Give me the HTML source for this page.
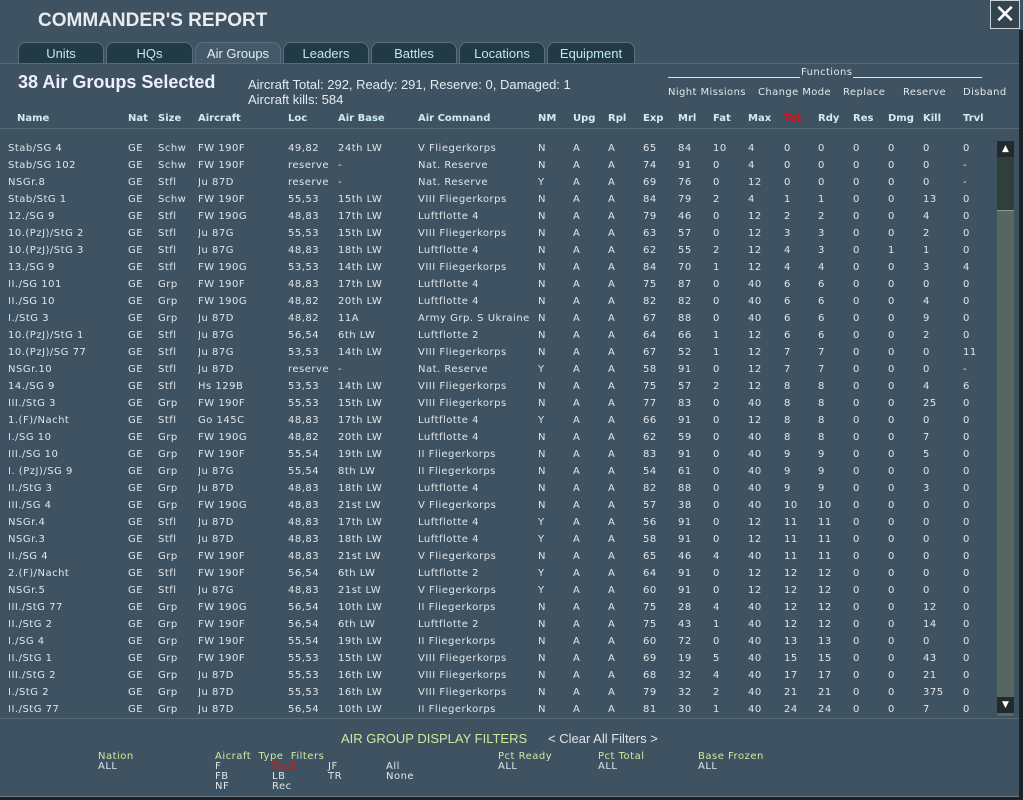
<!DOCTYPE html>
<html><head><meta charset="utf-8"><style>
*{margin:0;padding:0;box-sizing:border-box}
body{width:1023px;height:800px;overflow:hidden;background:#3f5262;font-family:"DejaVu Sans","Liberation Sans",sans-serif;color:#dfe6ea;position:relative}
.abs{position:absolute;white-space:nowrap}
.title{left:38px;top:10px;font:bold 19px "Liberation Sans",sans-serif;color:#e8ecef}
.close{left:990px;top:0;width:30px;height:29px;border:1px solid #c9d2d8;background:#34444f;color:#fff;font:26px "Liberation Sans",sans-serif;text-align:center;line-height:27px}
.tab{position:absolute;top:42px;height:22px;background:#213a46;border:1px solid #5b6f7b;border-bottom:none;border-radius:8px 8px 0 0;color:#bfe8ee;font:13px "Liberation Sans",sans-serif;text-align:center;line-height:22px}
.tab.act{background:#44596a;color:#e6eef2}
.hl{position:absolute;left:0;width:1023px;height:1px;background:#2a3a45;border-bottom:1px solid #566a77}
.sel{left:18px;top:72px;font:bold 18px "Liberation Sans",sans-serif;color:#eef}
.tot{left:248px;top:77px;font:13px/15px "Liberation Sans",sans-serif;color:#e4ebef}
.fn{font-size:10px;letter-spacing:.4px;color:#dfe8ec}
table{position:absolute;left:8px;border-collapse:collapse;table-layout:fixed;font-size:10px;letter-spacing:.5px}
td{height:17px;padding:0;white-space:nowrap;overflow:hidden}
thead td{font-weight:bold;color:#cdeef2;letter-spacing:0}
.flt{font-size:10px;letter-spacing:.5px;line-height:10px}
.g{color:#cde9a0}
</style></head><body>
<div class="abs title">COMMANDER'S REPORT</div>
<div class="abs close">✕</div>
<div class="tab" style="left:18px;width:86px">Units</div>
<div class="tab" style="left:106px;width:87px">HQs</div>
<div class="tab act" style="left:195px;width:86px">Air Groups</div>
<div class="tab" style="left:283px;width:86px">Leaders</div>
<div class="tab" style="left:371px;width:86px">Battles</div>
<div class="tab" style="left:459px;width:86px">Locations</div>
<div class="tab" style="left:547px;width:88px">Equipment</div>
<div class="hl" style="top:63px"></div>
<div class="abs sel">38 Air Groups Selected</div>
<div class="abs tot">Aircraft Total: 292, Ready: 291, Reserve: 0, Damaged: 1<br>Aircraft kills: 584</div>
<div class="abs" style="left:668px;top:77px;width:314px;height:1px;background:#e0e6ea"></div>
<div class="abs fn" style="left:800px;top:67px;background:#3f5262;padding:0 1px">Functions</div>
<div class="abs fn" style="left:668px;top:87px">Night Missions</div>
<div class="abs fn" style="left:758px;top:87px">Change Mode</div>
<div class="abs fn" style="left:843px;top:87px">Replace</div>
<div class="abs fn" style="left:903px;top:87px">Reserve</div>
<div class="abs fn" style="left:963px;top:87px">Disband</div>
<table style="top:110px;width:990px">
<colgroup><col style="width:120px"><col style="width:30px"><col style="width:40px"><col style="width:90px"><col style="width:50px"><col style="width:80px"><col style="width:120px"><col style="width:35px"><col style="width:35px"><col style="width:35px"><col style="width:35px"><col style="width:35px"><col style="width:35px"><col style="width:36px"><col style="width:34px"><col style="width:35px"><col style="width:35px"><col style="width:35px"><col style="width:40px"><col></colgroup>
<thead><tr><td style="padding-left:9px">Name</td><td>Nat</td><td>Size</td><td>Aircraft</td><td>Loc</td><td>Air Base</td><td>Air Comnand</td><td>NM</td><td>Upg</td><td>Rpl</td><td>Exp</td><td>Mrl</td><td>Fat</td><td>Max</td><td style="color:#d11">Tot</td><td>Rdy</td><td>Res</td><td>Dmg</td><td>Kill</td><td>Trvl</td></tr></thead>
</table>
<div class="hl" style="top:128px"></div>
<table style="top:140px;width:990px">
<colgroup><col style="width:120px"><col style="width:30px"><col style="width:40px"><col style="width:90px"><col style="width:50px"><col style="width:80px"><col style="width:120px"><col style="width:35px"><col style="width:35px"><col style="width:35px"><col style="width:35px"><col style="width:35px"><col style="width:35px"><col style="width:36px"><col style="width:34px"><col style="width:35px"><col style="width:35px"><col style="width:35px"><col style="width:40px"><col></colgroup>
<tbody>
<tr><td>Stab/SG 4</td><td>GE</td><td>Schw</td><td>FW 190F</td><td>49,82</td><td>24th LW</td><td>V Fliegerkorps</td><td>N</td><td>A</td><td>A</td><td>65</td><td>84</td><td>10</td><td>4</td><td>0</td><td>0</td><td>0</td><td>0</td><td>0</td><td>0</td></tr>
<tr><td>Stab/SG 102</td><td>GE</td><td>Schw</td><td>FW 190F</td><td>reserve</td><td>-</td><td>Nat. Reserve</td><td>N</td><td>A</td><td>A</td><td>74</td><td>91</td><td>0</td><td>4</td><td>0</td><td>0</td><td>0</td><td>0</td><td>0</td><td>-</td></tr>
<tr><td>NSGr.8</td><td>GE</td><td>Stfl</td><td>Ju 87D</td><td>reserve</td><td>-</td><td>Nat. Reserve</td><td>Y</td><td>A</td><td>A</td><td>69</td><td>76</td><td>0</td><td>12</td><td>0</td><td>0</td><td>0</td><td>0</td><td>0</td><td>-</td></tr>
<tr><td>Stab/StG 1</td><td>GE</td><td>Schw</td><td>FW 190F</td><td>55,53</td><td>15th LW</td><td>VIII Fliegerkorps</td><td>N</td><td>A</td><td>A</td><td>84</td><td>79</td><td>2</td><td>4</td><td>1</td><td>1</td><td>0</td><td>0</td><td>13</td><td>0</td></tr>
<tr><td>12./SG 9</td><td>GE</td><td>Stfl</td><td>FW 190G</td><td>48,83</td><td>17th LW</td><td>Luftflotte 4</td><td>N</td><td>A</td><td>A</td><td>79</td><td>46</td><td>0</td><td>12</td><td>2</td><td>2</td><td>0</td><td>0</td><td>4</td><td>0</td></tr>
<tr><td>10.(PzJ)/StG 2</td><td>GE</td><td>Stfl</td><td>Ju 87G</td><td>55,53</td><td>15th LW</td><td>VIII Fliegerkorps</td><td>N</td><td>A</td><td>A</td><td>63</td><td>57</td><td>0</td><td>12</td><td>3</td><td>3</td><td>0</td><td>0</td><td>2</td><td>0</td></tr>
<tr><td>10.(PzJ)/StG 3</td><td>GE</td><td>Stfl</td><td>Ju 87G</td><td>48,83</td><td>18th LW</td><td>Luftflotte 4</td><td>N</td><td>A</td><td>A</td><td>62</td><td>55</td><td>2</td><td>12</td><td>4</td><td>3</td><td>0</td><td>1</td><td>1</td><td>0</td></tr>
<tr><td>13./SG 9</td><td>GE</td><td>Stfl</td><td>FW 190G</td><td>53,53</td><td>14th LW</td><td>VIII Fliegerkorps</td><td>N</td><td>A</td><td>A</td><td>84</td><td>70</td><td>1</td><td>12</td><td>4</td><td>4</td><td>0</td><td>0</td><td>3</td><td>4</td></tr>
<tr><td>II./SG 101</td><td>GE</td><td>Grp</td><td>FW 190F</td><td>48,83</td><td>17th LW</td><td>Luftflotte 4</td><td>N</td><td>A</td><td>A</td><td>75</td><td>87</td><td>0</td><td>40</td><td>6</td><td>6</td><td>0</td><td>0</td><td>0</td><td>0</td></tr>
<tr><td>II./SG 10</td><td>GE</td><td>Grp</td><td>FW 190G</td><td>48,82</td><td>20th LW</td><td>Luftflotte 4</td><td>N</td><td>A</td><td>A</td><td>82</td><td>82</td><td>0</td><td>40</td><td>6</td><td>6</td><td>0</td><td>0</td><td>4</td><td>0</td></tr>
<tr><td>I./StG 3</td><td>GE</td><td>Grp</td><td>Ju 87D</td><td>48,82</td><td>11A</td><td>Army Grp. S Ukraine</td><td>N</td><td>A</td><td>A</td><td>67</td><td>88</td><td>0</td><td>40</td><td>6</td><td>6</td><td>0</td><td>0</td><td>9</td><td>0</td></tr>
<tr><td>10.(PzJ)/StG 1</td><td>GE</td><td>Stfl</td><td>Ju 87G</td><td>56,54</td><td>6th LW</td><td>Luftflotte 2</td><td>N</td><td>A</td><td>A</td><td>64</td><td>66</td><td>1</td><td>12</td><td>6</td><td>6</td><td>0</td><td>0</td><td>2</td><td>0</td></tr>
<tr><td>10.(PzJ)/SG 77</td><td>GE</td><td>Stfl</td><td>Ju 87G</td><td>53,53</td><td>14th LW</td><td>VIII Fliegerkorps</td><td>N</td><td>A</td><td>A</td><td>67</td><td>52</td><td>1</td><td>12</td><td>7</td><td>7</td><td>0</td><td>0</td><td>0</td><td>11</td></tr>
<tr><td>NSGr.10</td><td>GE</td><td>Stfl</td><td>Ju 87D</td><td>reserve</td><td>-</td><td>Nat. Reserve</td><td>Y</td><td>A</td><td>A</td><td>58</td><td>91</td><td>0</td><td>12</td><td>7</td><td>7</td><td>0</td><td>0</td><td>0</td><td>-</td></tr>
<tr><td>14./SG 9</td><td>GE</td><td>Stfl</td><td>Hs 129B</td><td>53,53</td><td>14th LW</td><td>VIII Fliegerkorps</td><td>N</td><td>A</td><td>A</td><td>75</td><td>57</td><td>2</td><td>12</td><td>8</td><td>8</td><td>0</td><td>0</td><td>4</td><td>6</td></tr>
<tr><td>III./StG 3</td><td>GE</td><td>Grp</td><td>FW 190F</td><td>55,53</td><td>15th LW</td><td>VIII Fliegerkorps</td><td>N</td><td>A</td><td>A</td><td>77</td><td>83</td><td>0</td><td>40</td><td>8</td><td>8</td><td>0</td><td>0</td><td>25</td><td>0</td></tr>
<tr><td>1.(F)/Nacht</td><td>GE</td><td>Stfl</td><td>Go 145C</td><td>48,83</td><td>17th LW</td><td>Luftflotte 4</td><td>Y</td><td>A</td><td>A</td><td>66</td><td>91</td><td>0</td><td>12</td><td>8</td><td>8</td><td>0</td><td>0</td><td>0</td><td>0</td></tr>
<tr><td>I./SG 10</td><td>GE</td><td>Grp</td><td>FW 190G</td><td>48,82</td><td>20th LW</td><td>Luftflotte 4</td><td>N</td><td>A</td><td>A</td><td>62</td><td>59</td><td>0</td><td>40</td><td>8</td><td>8</td><td>0</td><td>0</td><td>7</td><td>0</td></tr>
<tr><td>III./SG 10</td><td>GE</td><td>Grp</td><td>FW 190F</td><td>55,54</td><td>19th LW</td><td>II Fliegerkorps</td><td>N</td><td>A</td><td>A</td><td>83</td><td>91</td><td>0</td><td>40</td><td>9</td><td>9</td><td>0</td><td>0</td><td>5</td><td>0</td></tr>
<tr><td>I. (PzJ)/SG 9</td><td>GE</td><td>Grp</td><td>Ju 87G</td><td>55,54</td><td>8th LW</td><td>II Fliegerkorps</td><td>N</td><td>A</td><td>A</td><td>54</td><td>61</td><td>0</td><td>40</td><td>9</td><td>9</td><td>0</td><td>0</td><td>0</td><td>0</td></tr>
<tr><td>II./StG 3</td><td>GE</td><td>Grp</td><td>Ju 87D</td><td>48,83</td><td>18th LW</td><td>Luftflotte 4</td><td>N</td><td>A</td><td>A</td><td>82</td><td>88</td><td>0</td><td>40</td><td>9</td><td>9</td><td>0</td><td>0</td><td>3</td><td>0</td></tr>
<tr><td>III./SG 4</td><td>GE</td><td>Grp</td><td>FW 190G</td><td>48,83</td><td>21st LW</td><td>V Fliegerkorps</td><td>N</td><td>A</td><td>A</td><td>57</td><td>38</td><td>0</td><td>40</td><td>10</td><td>10</td><td>0</td><td>0</td><td>0</td><td>0</td></tr>
<tr><td>NSGr.4</td><td>GE</td><td>Stfl</td><td>Ju 87D</td><td>48,83</td><td>17th LW</td><td>Luftflotte 4</td><td>Y</td><td>A</td><td>A</td><td>56</td><td>91</td><td>0</td><td>12</td><td>11</td><td>11</td><td>0</td><td>0</td><td>0</td><td>0</td></tr>
<tr><td>NSGr.3</td><td>GE</td><td>Stfl</td><td>Ju 87D</td><td>48,83</td><td>18th LW</td><td>Luftflotte 4</td><td>Y</td><td>A</td><td>A</td><td>58</td><td>91</td><td>0</td><td>12</td><td>11</td><td>11</td><td>0</td><td>0</td><td>0</td><td>0</td></tr>
<tr><td>II./SG 4</td><td>GE</td><td>Grp</td><td>FW 190F</td><td>48,83</td><td>21st LW</td><td>V Fliegerkorps</td><td>N</td><td>A</td><td>A</td><td>65</td><td>46</td><td>4</td><td>40</td><td>11</td><td>11</td><td>0</td><td>0</td><td>0</td><td>0</td></tr>
<tr><td>2.(F)/Nacht</td><td>GE</td><td>Stfl</td><td>FW 190F</td><td>56,54</td><td>6th LW</td><td>Luftflotte 2</td><td>Y</td><td>A</td><td>A</td><td>64</td><td>91</td><td>0</td><td>12</td><td>12</td><td>12</td><td>0</td><td>0</td><td>0</td><td>0</td></tr>
<tr><td>NSGr.5</td><td>GE</td><td>Stfl</td><td>Ju 87G</td><td>48,83</td><td>21st LW</td><td>V Fliegerkorps</td><td>Y</td><td>A</td><td>A</td><td>60</td><td>91</td><td>0</td><td>12</td><td>12</td><td>12</td><td>0</td><td>0</td><td>0</td><td>0</td></tr>
<tr><td>III./StG 77</td><td>GE</td><td>Grp</td><td>FW 190G</td><td>56,54</td><td>10th LW</td><td>II Fliegerkorps</td><td>N</td><td>A</td><td>A</td><td>75</td><td>28</td><td>4</td><td>40</td><td>12</td><td>12</td><td>0</td><td>0</td><td>12</td><td>0</td></tr>
<tr><td>II./StG 2</td><td>GE</td><td>Grp</td><td>FW 190F</td><td>56,54</td><td>6th LW</td><td>Luftflotte 2</td><td>N</td><td>A</td><td>A</td><td>75</td><td>43</td><td>1</td><td>40</td><td>12</td><td>12</td><td>0</td><td>0</td><td>14</td><td>0</td></tr>
<tr><td>I./SG 4</td><td>GE</td><td>Grp</td><td>FW 190F</td><td>55,54</td><td>19th LW</td><td>II Fliegerkorps</td><td>N</td><td>A</td><td>A</td><td>60</td><td>72</td><td>0</td><td>40</td><td>13</td><td>13</td><td>0</td><td>0</td><td>0</td><td>0</td></tr>
<tr><td>II./StG 1</td><td>GE</td><td>Grp</td><td>FW 190F</td><td>55,53</td><td>15th LW</td><td>VIII Fliegerkorps</td><td>N</td><td>A</td><td>A</td><td>69</td><td>19</td><td>5</td><td>40</td><td>15</td><td>15</td><td>0</td><td>0</td><td>43</td><td>0</td></tr>
<tr><td>III./StG 2</td><td>GE</td><td>Grp</td><td>Ju 87D</td><td>55,53</td><td>16th LW</td><td>VIII Fliegerkorps</td><td>N</td><td>A</td><td>A</td><td>68</td><td>32</td><td>4</td><td>40</td><td>17</td><td>17</td><td>0</td><td>0</td><td>21</td><td>0</td></tr>
<tr><td>I./StG 2</td><td>GE</td><td>Grp</td><td>Ju 87D</td><td>55,53</td><td>16th LW</td><td>VIII Fliegerkorps</td><td>N</td><td>A</td><td>A</td><td>79</td><td>32</td><td>2</td><td>40</td><td>21</td><td>21</td><td>0</td><td>0</td><td>375</td><td>0</td></tr>
<tr><td>II./StG 77</td><td>GE</td><td>Grp</td><td>Ju 87D</td><td>56,54</td><td>10th LW</td><td>II Fliegerkorps</td><td>N</td><td>A</td><td>A</td><td>81</td><td>30</td><td>1</td><td>40</td><td>24</td><td>24</td><td>0</td><td>0</td><td>7</td><td>0</td></tr>
</tbody></table>
<div class="abs" style="left:997px;top:141px;width:17px;height:575px;background:#56675f"></div>
<div class="abs" style="left:997px;top:141px;width:17px;height:70px;background:#2f3f3c;border-bottom:1px solid #8a9a94"></div>
<div class="abs" style="left:997px;top:141px;width:17px;height:16px;background:#222a2b;color:#fff;font-size:9px;text-align:center;line-height:16px">▲</div>
<div class="abs" style="left:997px;top:697px;width:17px;height:16px;background:#222a2b;color:#fff;font-size:9px;text-align:center;line-height:16px">▼</div>
<div class="hl" style="top:718px"></div>
<div class="abs" style="left:341px;top:731px;font:13px 'Liberation Sans',sans-serif;color:#cde9a0">AIR GROUP DISPLAY FILTERS</div>
<div class="abs" style="left:548px;top:731px;font:13px 'Liberation Sans',sans-serif;color:#dfe6ea">&lt; Clear All Filters &gt;</div>
<div class="abs flt" style="left:98px;top:752px"><span class="g">Nation</span><br>ALL</div>
<div class="abs flt" style="left:215px;top:752px"><span class="g">Aicraft&nbsp; Type&nbsp; Filters</span><br>F<br>FB<br>NF</div>
<div class="abs flt" style="left:272px;top:762px"><span style="color:#c21">TacB</span><br>LB<br>Rec</div>
<div class="abs flt" style="left:328px;top:762px">JF<br>TR</div>
<div class="abs flt" style="left:386px;top:762px">All<br>None</div>
<div class="abs flt" style="left:498px;top:752px"><span class="g">Pct Ready</span><br>ALL</div>
<div class="abs flt" style="left:598px;top:752px"><span class="g">Pct Total</span><br>ALL</div>
<div class="abs flt" style="left:698px;top:752px"><span class="g">Base Frozen</span><br>ALL</div>
<div class="abs" style="left:0;top:796px;width:1023px;height:4px;background:#1b2228;border-top:1px solid #6b7c86"></div>
<div class="abs" style="left:1019px;top:30px;width:4px;height:770px;background:#1b2228"></div>
</body></html>
